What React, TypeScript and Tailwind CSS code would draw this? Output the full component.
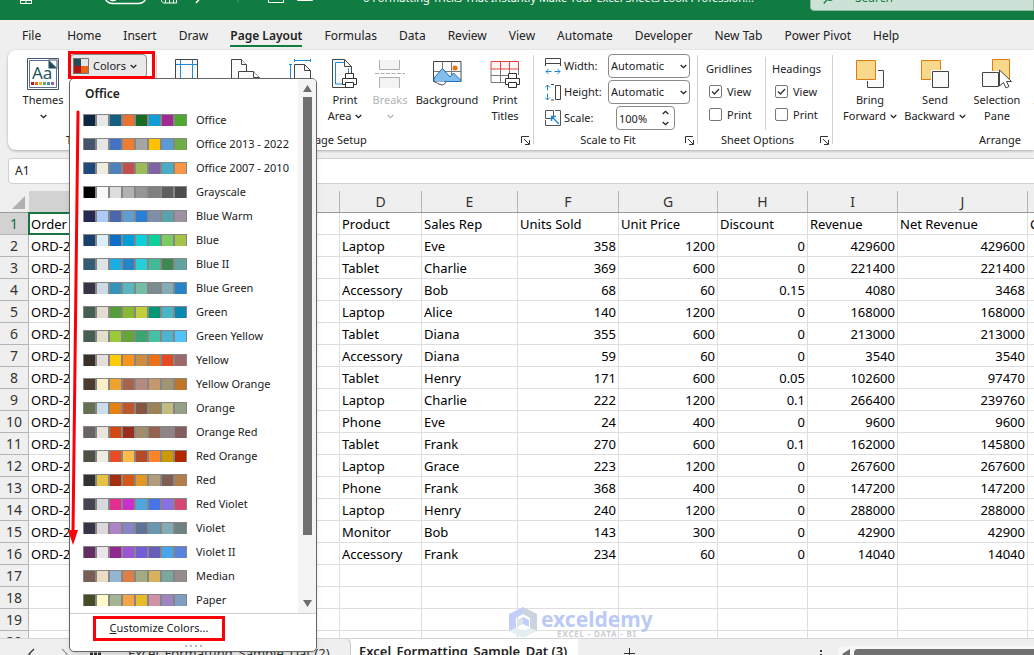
import type { ReactNode } from 'react';
import { clsx } from 'clsx';

const palettes = [
    { name: 'Office', colors: ['#0e2841', '#e8e8e8', '#156082', '#e97132', '#196b24', '#0f9ed5', '#a02b93', '#4ea72e'] },
    { name: 'Office 2013 - 2022', colors: ['#44546a', '#e7e6e6', '#4472c4', '#ed7d31', '#a5a5a5', '#ffc000', '#5b9bd5', '#70ad47'] },
    { name: 'Office 2007 - 2010', colors: ['#1f497d', '#eeece1', '#4f81bd', '#c0504d', '#9bbb59', '#8064a2', '#4bacc6', '#f79646'] },
    { name: 'Grayscale', colors: ['#000000', '#f8f8f8', '#dddddd', '#b2b2b2', '#969696', '#808080', '#5f5f5f', '#4d4d4d'] },
    { name: 'Blue Warm', colors: ['#242852', '#accbf9', '#4a66ac', '#629dd1', '#297fd5', '#7f8fa9', '#5aa2ae', '#9d90a0'] },
    { name: 'Blue', colors: ['#17406d', '#dbeff9', '#0f6fc6', '#009dd9', '#0bd0d9', '#10cf9b', '#7cca62', '#a5c249'] },
    { name: 'Blue II', colors: ['#335b74', '#dfe3e5', '#1cade4', '#2683c6', '#27ced7', '#42ba97', '#3e8853', '#62a39f'] },
    { name: 'Blue Green', colors: ['#373545', '#cedbe6', '#3494ba', '#58b6c0', '#75bda7', '#7a8c8e', '#84acb6', '#2683c6'] },
    { name: 'Green', colors: ['#455f51', '#e3ded1', '#549e39', '#8ab833', '#c0cf3a', '#029676', '#4ab5c4', '#0989b1'] },
    { name: 'Green Yellow', colors: ['#455f51', '#e2dfcc', '#99cb38', '#63a537', '#37a76f', '#44c1a3', '#4eb3cf', '#51c3f9'] },
    { name: 'Yellow', colors: ['#39302a', '#e5dedb', '#ffca08', '#f8931d', '#ce8d3e', '#ec7016', '#e64823', '#9c6a6a'] },
    { name: 'Yellow Orange', colors: ['#4e3b30', '#fbeec9', '#f0a22e', '#a5644e', '#b58b80', '#c3986d', '#a19574', '#c17529'] },
    { name: 'Orange', colors: ['#637052', '#ccddea', '#e48312', '#bd582c', '#865640', '#9b8357', '#c2bc80', '#94a088'] },
    { name: 'Orange Red', colors: ['#696464', '#e9e5dc', '#d34817', '#9b2d1f', '#a28e6a', '#956251', '#918485', '#855d5d'] },
    { name: 'Red Orange', colors: ['#505046', '#eeece1', '#e84c22', '#ffbd47', '#b64926', '#ff8427', '#cc9900', '#b22600'] },
    { name: 'Red', colors: ['#323232', '#e5c243', '#a5300f', '#d55816', '#e19825', '#b19c7d', '#7f5f52', '#b27d49'] },
    { name: 'Red Violet', colors: ['#454551', '#d8d9dc', '#e32d91', '#c830cc', '#4ea6dc', '#4775e7', '#8971e1', '#d54773'] },
    { name: 'Violet', colors: ['#373545', '#dcd8dc', '#ad84c6', '#8784c7', '#5d739a', '#6997af', '#84acb6', '#6f8183'] },
    { name: 'Violet II', colors: ['#632e62', '#eae5eb', '#92278f', '#9b57d3', '#755dd9', '#665eb8', '#45a5ed', '#5982db'] },
    { name: 'Median', colors: ['#775f55', '#ebddc3', '#94b6d2', '#dd8047', '#a5ab81', '#d8b25c', '#7ba79d', '#968c8c'] },
    { name: 'Paper', colors: ['#444d26', '#fefac9', '#a5b592', '#f3a447', '#e7bc29', '#d092a7', '#9c85c0', '#809ec2'] },
];

const tabs = ['File', 'Home', 'Insert', 'Draw', 'Page Layout', 'Formulas', 'Data', 'Review', 'View', 'Automate', 'Developer', 'New Tab', 'Power Pivot', 'Help'];

const columns = [
    { id: 'A', width: 'w-[105px]' },
    { id: 'B', width: 'w-[103px]' },
    { id: 'C', width: 'w-[103px]' },
    { id: 'D', width: 'w-[82px]' },
    { id: 'E', width: 'w-[96px]' },
    { id: 'F', width: 'w-[101px]' },
    { id: 'G', width: 'w-[99px]' },
    { id: 'H', width: 'w-[90px]' },
    { id: 'I', width: 'w-[90px]' },
    { id: 'J', width: 'w-[130px]' },
    { id: 'K', width: 'w-[80px]' },
];

const rows: string[][] = [
    ['Order', '', '', 'Product', 'Sales Rep', 'Units Sold', 'Unit Price', 'Discount', 'Revenue', 'Net Revenue', 'C'],
    ['ORD-2', '', '', 'Laptop', 'Eve', '358', '1200', '0', '429600', '429600', ''],
    ['ORD-2', '', '', 'Tablet', 'Charlie', '369', '600', '0', '221400', '221400', ''],
    ['ORD-2', '', '', 'Accessory', 'Bob', '68', '60', '0.15', '4080', '3468', ''],
    ['ORD-2', '', '', 'Laptop', 'Alice', '140', '1200', '0', '168000', '168000', ''],
    ['ORD-2', '', '', 'Tablet', 'Diana', '355', '600', '0', '213000', '213000', ''],
    ['ORD-2', '', '', 'Accessory', 'Diana', '59', '60', '0', '3540', '3540', ''],
    ['ORD-2', '', '', 'Tablet', 'Henry', '171', '600', '0.05', '102600', '97470', ''],
    ['ORD-2', '', '', 'Laptop', 'Charlie', '222', '1200', '0.1', '266400', '239760', ''],
    ['ORD-2', '', '', 'Phone', 'Eve', '24', '400', '0', '9600', '9600', ''],
    ['ORD-2', '', '', 'Tablet', 'Frank', '270', '600', '0.1', '162000', '145800', ''],
    ['ORD-2', '', '', 'Laptop', 'Grace', '223', '1200', '0', '267600', '267600', ''],
    ['ORD-2', '', '', 'Phone', 'Frank', '368', '400', '0', '147200', '147200', ''],
    ['ORD-2', '', '', 'Laptop', 'Henry', '240', '1200', '0', '288000', '288000', ''],
    ['ORD-2', '', '', 'Monitor', 'Bob', '143', '300', '0', '42900', '42900', ''],
    ['ORD-2', '', '', 'Accessory', 'Frank', '234', '60', '0', '14040', '14040', ''],
    ...Array.from({ length: 4 }, () => Array.from({ length: 11 }, () => '')),
];

function Chevron({ className }: { className?: string }) {
    return (
        <svg width="7" height="5" viewBox="0 0 7 5" fill="none" stroke="currentColor" strokeWidth="1.3" className={clsx('shrink-0', className)}>
            <path d="M.7 1l2.8 2.7L6.3 1" />
        </svg>
    );
}

function Launcher() {
    return (
        <button aria-label="More options" className="absolute right-1 top-[6px]">
            <svg width="9" height="9" viewBox="0 0 9 9" fill="none" stroke="#333">
                <path d="M.5 7V.5H8M3 3l5 5M8.5 4v4.5H4" />
            </svg>
        </button>
    );
}

function Group({ label, launcher, divider = true, className, children }: {
    label: string; launcher?: boolean; divider?: boolean; className?: string; children: ReactNode;
}) {
    return (
        <section className={clsx('relative flex flex-col shrink-0', className)}>
            <div className="flex h-20">{children}</div>
            <div className={clsx('relative h-5 text-center leading-5', launcher && 'pr-4')}>
                {label}
                {launcher && <Launcher />}
            </div>
            {divider && <span className="absolute right-0 top-[5px] bottom-[6px] w-px bg-[#d0d0d0]" />}
        </section>
    );
}

function BigButton({ icon, lines, arrow, disabled, className }: {
    icon: ReactNode; lines: string[]; arrow?: 'inline' | 'below'; disabled?: boolean; className?: string;
}) {
    return (
        <button disabled={disabled} className={clsx('flex flex-col items-center shrink-0 pt-2 leading-4 whitespace-nowrap', disabled && 'text-[#b4b4b4]', className)}>
            <span className="flex h-8 items-center justify-center mb-[2px]">{icon}</span>
            {lines.map((line, i) => (
                <span key={line} className="flex items-center gap-1">
                    {line}
                    {arrow === 'inline' && i === lines.length - 1 && <Chevron />}
                </span>
            ))}
            {arrow === 'below' && <span className="flex h-4 items-center"><Chevron /></span>}
        </button>
    );
}

const ThemesIcon = () => (
    <svg width="32" height="32" viewBox="0 0 32 32">
        <path d="M.5.5h31v31H.5z" fill="#fff" stroke="#44546a" />
        <path d="M2.5 2.500H22l7.500 8v19h-27z" fill="#fff" stroke="#5b6f8c" />
        <path d="M21.500 2v8.500H30z" fill="#1f4e5a" />
        <path d="M21.500 2H30v8.500z" fill="#fff" stroke="#44546a" />
        <text x="5" y="21" fontSize="17" fontFamily="Noto Sans" fill="#1f5560">Aa</text>
        <path d="M4 24h3v3H4z" fill="#b51a1a" />
        <path d="M8 24h3v3H8z" fill="#ef6a1a" />
        <path d="M12 24h3v3h-3z" fill="#eab72c" />
        <path d="M16 24h3v3h-3z" fill="#62a886" />
        <path d="M20 24h3v3h-3z" fill="#4a8fb0" />
        <path d="M24 24h3v3h-3z" fill="#9a5fa8" />
    </svg>
);

const MarginsIcon = () => (
    <svg width="24" height="30" viewBox="0 0 24 30" fill="none">
        <path d="M.5.5h22v29H.5z" fill="#fafafa" stroke="#444" />
        <path d="M5.500 1v28M17.500 1v28M1 5.500h21M1 24.500h21" stroke="#1e88d2" />
    </svg>
);

const OrientationIcon = () => (
    <svg width="30" height="30" viewBox="0 0 30 30" fill="#fafafa" stroke="#444">
        <path d="M.5.5h10l5 5V22H.5z" />
        <path d="M10.500.5v5h5" />
        <path d="M7.500 12.500h15l6 6v11h-21z" />
        <path d="M22.500 12.500v6h6" />
    </svg>
);

const SizeIcon = () => (
    <svg width="22" height="30" viewBox="0 0 22 30" fill="none">
        <path d="M5.500 1.500h16M5.500 0v3M21.500 0v3M1.500 5.500v24M0 5.500h3" stroke="#1e88d2" />
        <path d="M5.500 5.500h10l6 6v18h-16z" fill="#fafafa" stroke="#444" />
        <path d="M15.500 5.500v6h6" stroke="#444" />
    </svg>
);

const PrinterGlyph = () => (
    <g fill="#fff" stroke="#333">
        <path d="M3.500.5h8v5h-8z" />
        <path d="M.5 5.500h14v6H.5z" />
        <path d="M3.500 9.500h8v5h-8z" />
    </g>
);

const PrintAreaIcon = () => (
    <svg width="26" height="30" viewBox="0 0 26 30" fill="none">
        <path d="M.5.5h12l7 7v21H.5z" fill="#fafafa" stroke="#444" />
        <path d="M12.500.5v7h7" stroke="#444" />
        <path d="M12 3.500H3.500V25H10M16.500 9.500V14" stroke="#1e88d2" />
        <g transform="translate(10 14)"><PrinterGlyph /></g>
    </svg>
);

const BreaksIcon = () => (
    <svg width="30" height="28" viewBox="0 0 30 28" fill="#f3f3f3" stroke="#b0b0b0">
        <path d="M4.500 0v9.500h20V0" />
        <path d="M0 13.500h30" strokeDasharray="4 1.500" />
        <path d="M4.500 28v-10.500h20V28" />
    </svg>
);

const BackgroundIcon = () => (
    <svg width="29" height="28" viewBox="0 0 29 28" fill="none">
        <path d="M.5 1.500h27.500v20H.5z" fill="#fafafa" stroke="#444" />
        <path d="M.5 11.500H28M9.500 1.500v20M18.500 1.500v20" stroke="#777" />
        <path d="M1 18l8.500-9.500L17 17l3.500-4L28 20.500v1H1z" fill="#83beec" stroke="#1e6fb8" />
        <circle cx="22" cy="8" r="2.500" fill="#e8720c" />
        <path d="M.5 21.500c4 1 7 4.500 10 3s2-3 1-3" stroke="#444" fill="#fafafa" />
    </svg>
);

const PrintTitlesIcon = () => (
    <svg width="31" height="28" viewBox="0 0 31 28" fill="none">
        <path d="M1 9v13.500h14M1 15.500h18M10.500 9v13M19.500 9v5" stroke="#777" />
        <path d="M1 1.500h27.500v7.500H1zM10.500 1.500V9M19.500 1.500V9" stroke="#e8403a" fill="#fdf6f6" />
        <path d="M28.500 9v6" stroke="#777" />
        <g transform="translate(15 13)"><PrinterGlyph /></g>
    </svg>
);

const BringIcon = () => (
    <svg width="28" height="30" viewBox="0 0 28 30">
        <path d="M11.500 11.500h16v17h-16z" fill="#fafafa" stroke="#444" />
        <path d="M0 1h22v21H0z" fill="#fff" />
        <path d="M.5 1.500h19v19H.5z" fill="#f8d98c" stroke="#e07a10" />
    </svg>
);

const SendIcon = () => (
    <svg width="28" height="30" viewBox="0 0 28 30">
        <path d="M.5 1.500h19v19H.5z" fill="#f8d98c" stroke="#e07a10" />
        <path d="M10 11h18v18H10z" fill="#fff" />
        <path d="M11.500 12.500h16v16h-16z" fill="#fafafa" stroke="#444" />
    </svg>
);

const SelectionIcon = () => (
    <svg width="30" height="30" viewBox="0 0 30 30">
        <path d="M10.500.5h17v19h-17z" fill="#f8d98c" stroke="#e07a10" />
        <path d="M0 12h18v17H0z" fill="#fff" />
        <path d="M.5 13.500h16v14H.5z" fill="#fafafa" stroke="#444" />
        <path d="M17.500 11v16l4-3.500 2.500 5.500 3-1.500-2.500-5h5z" fill="#fff" stroke="#444" />
    </svg>
);

const AlignIcon = () => (
    <svg width="26" height="30" viewBox="0 0 26 30" fill="none">
        <path d="M.5 1v28" stroke="#444" />
        <path d="M4.500 5.500h18v7h-18zM4.500 17.500h11v7h-11z" stroke="#1e88d2" />
    </svg>
);

const WidthIcon = () => (
    <svg width="16" height="17" viewBox="0 0 16 17" fill="none">
        <path d="M.5.500h15v5H.5zM.5 5v3M15.500 5v3" stroke="#444" />
        <path d="M1 13.500h5.500M9.500 13.500H15M3.500 11L1 13.500 3.500 16M12.500 11l2.500 2.500-2.500 2.500" stroke="#1e88d2" />
    </svg>
);

const HeightIcon = () => (
    <svg width="16" height="17" viewBox="0 0 16 17" fill="none">
        <path d="M10.500 1.500h5v14h-5zM6 .5h3M6 16h3" stroke="#444" />
        <path d="M2.500 1v5.500M2.500 9.500V16M0 3.500L2.500 1 5 3.500M0 13.500L2.500 16 5 13.500" stroke="#1e88d2" />
    </svg>
);

const ScaleIcon = () => (
    <svg width="16" height="16" viewBox="0 0 16 16" fill="none">
        <path d="M.5.500h8v8h-8zM10 .5h5.500v15H.5V10" stroke="#555" />
        <path d="M14 14L6.500 6.500M6.500 11V6.500H11" stroke="#1e88d2" strokeWidth="1.400" />
    </svg>
);

function ScaleRow({ icon, label, id, children }: { icon: ReactNode; label: string; id: string; children: ReactNode }) {
    return (
        <div className="flex h-6 items-center">
            <span className="w-[19px]">{icon}</span>
            <label htmlFor={id} className="w-11">{label}</label>
            {children}
        </div>
    );
}

function AutoSelect({ id }: { id: string }) {
    return (
        <span className="relative">
            <select id={id} className="block h-6 w-[82px] appearance-none rounded border border-[#8a8a8a] bg-white pl-[2px] text-[11px]">
                <option>Automatic</option>
            </select>
            <Chevron className="absolute right-[3px] top-[10px] pointer-events-none" />
        </span>
    );
}

function ViewOptions({ title }: { title: string }) {
    return (
        <div className="leading-[23px]">
            <div>{title}</div>
            {['View', 'Print'].map((name) => (
                <label key={name} className="flex items-center gap-[5px] pl-[3px]">
                    <span className="relative flex">
                        <input type="checkbox" defaultChecked={name === 'View'} className="peer size-[13px] appearance-none rounded-[2px] border border-[#777] bg-white" />
                        <svg width="13" height="13" viewBox="0 0 13 13" fill="none" stroke="#333" strokeWidth="1.300" className="absolute inset-0 hidden pointer-events-none peer-checked:block">
                            <path d="M3 6.500l2.500 2.500 4.500-5" />
                        </svg>
                    </span>
                    {name}
                </label>
            ))}
        </div>
    );
}

function ColorsMenu() {
    return (
        <div className="absolute left-[-1px] top-6 z-20 w-[248px] rounded-[5px] border border-[#666] bg-white shadow-md">
            <div className="flex">
                <div className="flex-1 pb-px">
                    <div className="h-[29px] pl-[15px] text-[12px] leading-[30px] font-semibold">Office</div>
                    {palettes.map((palette) => (
                        <button key={palette.name} className="flex h-6 w-full items-center pl-[13px] text-left">
                            <span className="mr-[9px] flex h-3 gap-[2px] bg-[#868686] px-px pt-px">
                                {palette.colors.map((color) => (
                                    <span key={color} className="w-[11px]" style={{ backgroundColor: color }} />
                                ))}
                            </span>
                            {palette.name}
                        </button>
                    ))}
                </div>
                <div className="flex w-[18px] flex-col items-center rounded-tr bg-[#f4f4f4] pt-1 pb-[5px]">
                    <svg width="9" height="14" viewBox="0 0 9 14"><path d="M4.500 2L9 9H0z" fill="#6e6e6e" /></svg>
                    <div className="h-[438px] w-[9px] bg-[#707070]" />
                    <svg width="9" height="8" viewBox="0 0 9 8" className="mt-auto"><path d="M0 0h9L4.500 7z" fill="#6e6e6e" /></svg>
                </div>
            </div>
            <div className="border-t border-[#d0d0d0] pt-[2px] pl-[23px]">
                <button className="block h-[25px] w-[132px] border-3 border-[#fb0007] text-center">
                    <u>C</u>ustomize Colors...
                </button>
            </div>
            <div className="flex h-[10px] items-center justify-center gap-[3px]">
                {[0, 1, 2, 3].map((i) => <span key={i} className="size-[2px] bg-[#b4b8c0]" />)}
            </div>
            {/* Arrow running down the palette list */}
            <svg width="14" height="436" viewBox="0 0 14 436" className="absolute left-[-3px] top-[31px] pointer-events-none">
                <path d="M11 2L6 422" stroke="#fb0007" strokeWidth="3" strokeLinecap="round" />
                <path d="M1 420h10L6 435z" fill="#fb0007" />
            </svg>
        </div>
    );
}

function TitleBar() {
    return (
        <header className="flex h-5 shrink-0 flex-col justify-end overflow-hidden bg-[#107c41] text-white">
            <div className="flex h-11 shrink-0 items-center">
                <svg width="322" height="24" viewBox="0 0 322 24" fill="none" stroke="#fff" className="w-[322px] shrink-0">
                    <path d="M16.500 11.500V5h15v6.500zM20.500 11.500v6h11v-6M26 11.500v6M20.500 14.500h11" />
                    <rect x="104.500" y="1.500" width="42" height="16" rx="8" strokeWidth="1.500" />
                    <circle cx="113" cy="11" r="4" fill="#fff" />
                    <path d="M161.500 2v13l2 2h13V2M165.500 17v-6h8v6M169.500 12v5" />
                    <path d="M204 8l-8 9" strokeWidth="1.500" />
                    <path d="M232 9l7 7" stroke="#4e9d71" />
                    <path d="M268.500 2v14.500h15V2M272 10l4 4 4-4M297.500 2v12.500h15V2" />
                </svg>
                <div className="flex-1 truncate pl-[41px] text-[11px]">6 Formatting Tricks That Instantly Make Your Excel Sheets Look Profession...</div>
                <div className="flex h-[26px] w-[224px] shrink-0 items-center gap-5 rounded-bl border border-[#8fb9a0] bg-[#cde2d6] pl-3 text-[12px] text-[#107c41]">
                    <svg width="12" height="12" viewBox="0 0 12 12" fill="none" stroke="currentColor" strokeWidth="1.300">
                        <circle cx="7" cy="4.500" r="3.800" />
                        <path d="M4.300 7.500L.8 11.500" />
                    </svg>
                    Search
                </div>
            </div>
        </header>
    );
}

function Ribbon() {
    return (
        <div className="relative z-10 ml-2 flex h-[100px] shrink-0 rounded-l-lg bg-white pl-2 text-[11px] shadow-[0_1px_3px_rgba(0,0,0,0.28)]">
            <Group label="Themes" className="w-[141px]">
                <BigButton className="w-[54px]" icon={<ThemesIcon />} lines={['Themes']} arrow="below" />
                <div className="relative pt-1">
                    <button className="flex h-6 w-[77px] items-center rounded border border-[#8a8a8a] bg-[#e9e9e9] pl-[2px]">
                        <svg width="16" height="16" viewBox="0 0 16 16" className="mr-1">
                            <path d="M0 0h8v8H0z" fill="#1f4e5a" />
                            <path d="M8 0h8v8H8z" fill="#e6e6e6" />
                            <path d="M0 8h8v8H0z" fill="#b01513" />
                            <path d="M8 8h8v8H8z" fill="#ea6312" />
                            <path d="M.5.5h15v15H.5z" fill="none" stroke="#777" />
                        </svg>
                        Colors
                        <Chevron className="ml-1" />
                    </button>
                    <div className="relative">
                        <div className="absolute left-0 -top-6"><ColorsMenu /></div>
                    </div>
                    <span className="absolute -left-[2px] top-px z-30 h-[28px] w-[87px] border-3 border-[#fb0007] pointer-events-none" />
                </div>
            </Group>

            <Group label="Page Setup" launcher className="w-[377px]">
                <BigButton className="w-[60px]" icon={<MarginsIcon />} lines={[]} />
                <BigButton className="w-[58px]" icon={<OrientationIcon />} lines={[]} />
                <BigButton className="w-[50px]" icon={<SizeIcon />} lines={[]} />
                <BigButton className="w-10" icon={<PrintAreaIcon />} lines={['Print', 'Area']} arrow="inline" />
                <BigButton className="w-[50px]" icon={<BreaksIcon />} lines={['Breaks']} arrow="below" disabled />
                <BigButton className="w-16" icon={<BackgroundIcon />} lines={['Background']} />
                <BigButton className="w-[52px]" icon={<PrintTitlesIcon />} lines={['Print', 'Titles']} />
            </Group>

            <Group label="Scale to Fit" launcher className="w-[164px]">
                <div className="flex flex-col gap-[2px] pt-1 pl-[11px]">
                    <ScaleRow icon={<WidthIcon />} label="Width:" id="fit-width"><AutoSelect id="fit-width" /></ScaleRow>
                    <ScaleRow icon={<HeightIcon />} label="Height:" id="fit-height"><AutoSelect id="fit-height" /></ScaleRow>
                    <ScaleRow icon={<ScaleIcon />} label="Scale:" id="fit-scale">
                        <span className="relative ml-2">
                            <input id="fit-scale" defaultValue="100%" className="block h-6 w-[59px] rounded border border-[#8a8a8a] bg-white pl-[2px] text-[11px]" />
                            <Chevron className="absolute right-[6px] top-1 rotate-180" />
                            <Chevron className="absolute right-[6px] bottom-1" />
                        </span>
                    </ScaleRow>
                </div>
            </Group>

            <Group label="Sheet Options" launcher className="w-[135px]">
                <div className="flex pt-[7px] pl-2">
                    <div className="w-[60px] border-r border-[#d0d0d0]"><ViewOptions title="Gridlines" /></div>
                    <div className="pl-[6px]"><ViewOptions title="Headings" /></div>
                </div>
            </Group>

            <Group label="Arrange" divider={false} className="w-[330px] pl-1">
                <BigButton className="w-[66px]" icon={<BringIcon />} lines={['Bring', 'Forward']} arrow="inline" />
                <BigButton className="w-16" icon={<SendIcon />} lines={['Send', 'Backward']} arrow="inline" />
                <BigButton className="w-[60px]" icon={<SelectionIcon />} lines={['Selection', 'Pane']} />
                <BigButton className="w-10" icon={<AlignIcon />} lines={['Align']} />
            </Group>
        </div>
    );
}

function Watermark() {
    return (
        <div className="absolute bottom-0 left-[509px] flex items-center gap-1">
            <svg width="28" height="31" viewBox="0 0 28 31">
                <path d="M14 0L0 7v17l7-3V11l7-4z" fill="#c3cffa" />
                <path d="M14 0l14 7v17l-7-3V11l-7-4z" fill="#cdd3dc" />
                <path d="M0 24l14 7 14-7-7-3-7 3-7-3z" fill="#e3eef2" />
                <path d="M14 10l6 3v7l-6-3z" fill="#c3cffa" />
                <path d="M14 10l-6 3v7l6-3z" fill="#dde3e8" />
            </svg>
            <div className="text-center">
                <div className="text-[21px] leading-[22px] font-bold text-[#bccaf6]">exceldemy</div>
                <div className="text-[8px] leading-[8px] font-bold tracking-widest text-[#c9ccd2]">EXCEL - DATA - BI</div>
            </div>
        </div>
    );
}

function Sheet() {
    return (
        <main className="relative flex-1 overflow-hidden bg-white">
            <table className="w-[1105px] table-fixed border-separate border-spacing-0 text-[13px]">
                <colgroup>
                    <col className="w-[29px]" />
                    {columns.map((column) => <col key={column.id} className={column.width} />)}
                </colgroup>
                <thead>
                    <tr className="h-[29px] bg-[#efefef] text-[14px] text-[#333]">
                        <th className="border-b border-[#9b9b9b] p-0">
                            <svg width="13" height="13" viewBox="0 0 13 13" className="mt-2 ml-3"><path d="M13 0v13H0z" fill="#b0b0b0" /></svg>
                        </th>
                        {columns.map((column) => (
                            <th key={column.id} scope="col" className="border-b border-[#9b9b9b] p-0 pt-[7px] font-normal">
                                <div className={clsx('h-[21px] border-r border-[#b5b5b5] leading-[21px]', column.id === 'A' && 'bg-[#d2d2d2]')}>{column.id}</div>
                            </th>
                        ))}
                    </tr>
                </thead>
                <tbody>
                    {rows.map((row, r) => (
                        <tr key={r} className="h-[22px]">
                            <th scope="row" className={clsx('border-r border-b border-[#b5b5b5] p-0 text-[14px] leading-[21px] font-normal', r === 0 ? 'bg-[#d2d2d2] text-[#0f703b]' : 'bg-[#efefef] text-[#333]')}>
                                {r + 1}
                            </th>
                            {row.map((value, c) => (
                                <td
                                    key={c}
                                    className={clsx(
                                        'relative border-r border-b border-[#dedede] px-[2px] pt-[2px] pb-0 leading-[19px] whitespace-nowrap text-black',
                                        r > 0 && c > 4 && 'text-right',
                                    )}
                                >
                                    {value}
                                    {r === 0 && c === 0 && <span className="absolute -inset-px border-2 border-[#1a7343]" />}
                                </td>
                            ))}
                        </tr>
                    ))}
                </tbody>
            </table>
            <Watermark />
        </main>
    );
}

function SheetTabs() {
    return (
        <footer className="h-[17px] shrink-0 overflow-hidden border-t border-[#d5d5d5] bg-[#efefef] text-[13px]">
            <div className="flex h-[26px] items-center">
                <div className="flex w-[124px] shrink-0 items-center pt-1 pl-7">
                    <svg width="74" height="12" viewBox="0 0 74 12" fill="none" strokeWidth="1.300">
                        <path d="M6 1L1 6l5 5" stroke="#333" />
                        <path d="M34 1l5 5-5 5" stroke="#999" />
                        <path d="M62 6h11" stroke="#333" strokeWidth="3" strokeDasharray="3 1" />
                    </svg>
                </div>
                <button className="h-full w-[227px] shrink-0 rounded-tr-md border-r border-[#c8c8c8] pt-1 pl-1 text-left whitespace-nowrap text-[#333]">Excel_Formatting_Sample_Dat (2)</button>
                <button className="h-full w-[227px] shrink-0 bg-white px-2 text-left font-semibold whitespace-nowrap">Excel_Formatting_Sample_Dat (3)</button>
                <button aria-label="New sheet" className="ml-[46px] pt-[3px]">
                    <svg width="11" height="11" viewBox="0 0 11 11" stroke="#333"><path d="M5.500 0v11M0 5.500h11" /></svg>
                </button>
                <svg width="3" height="12" viewBox="0 0 3 12" fill="#333" className="mt-2 ml-auto shrink-0"><path d="M0 0h2v2H0zM0 4h2v2H0zM0 8h2v2H0z" /></svg>
                <div className="mt-1 ml-[15px] flex h-4 w-[196px] shrink-0 items-center rounded-l-md bg-[#f7f7f7] pl-1">
                    <svg width="8" height="10" viewBox="0 0 8 10" className="mr-1"><path d="M8 0v10L0 5z" fill="#6e6e6e" /></svg>
                    <div className="h-[10px] flex-1 rounded-l bg-[#707070]" />
                </div>
            </div>
        </footer>
    );
}

export default function App() {
    return (
        <div className="flex h-screen flex-col overflow-hidden bg-[#efefef] font-['Noto_Sans',sans-serif] text-[#222]">
            <TitleBar />
            <nav className="flex h-[30px] shrink-0 items-center gap-[22px] pl-[22px] text-[12px] whitespace-nowrap">
                {tabs.map((tab) => (
                    <button key={tab} className={clsx('relative h-full pt-[2px] first:mr-1', tab === 'Page Layout' && 'font-semibold')}>
                        {tab}
                        {tab === 'Page Layout' && <span className="absolute inset-x-0 bottom-[3px] h-[2px] bg-[#107c41]" />}
                    </button>
                ))}
            </nav>
            <Ribbon />
            <div className="mt-2 flex h-[26px] shrink-0 pl-2 text-[12px]">
                <input aria-label="Name box" defaultValue="A1" className="w-[110px] rounded border border-[#cfcfcf] bg-white pl-[6px]" />
                <input aria-label="Formula bar" className="ml-[100px] flex-1 border-y border-[#cfcfcf] bg-white" />
            </div>
            <Sheet />
            <SheetTabs />
        </div>
    );
}
